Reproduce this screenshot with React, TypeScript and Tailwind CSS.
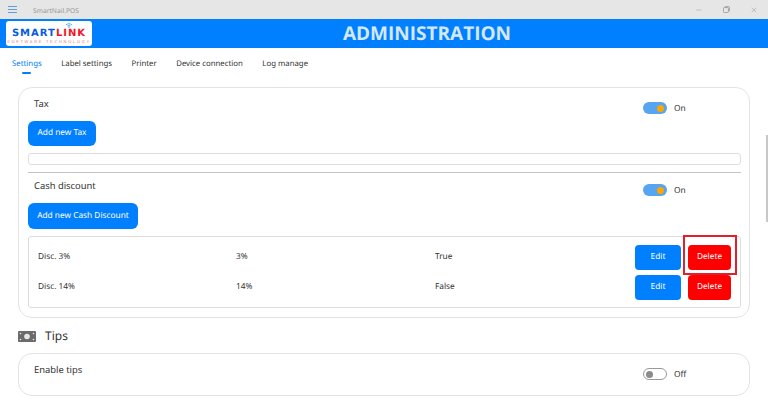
import { Minus, X } from 'lucide-react';

const tabs = ['Settings', 'Label settings', 'Printer', 'Device connection', 'Log manage'];

function Toggle({ on }: { on: boolean }) {
  return (
    <div className="w-[43px] flex items-center gap-[7px]">
      {on ? (
        <div className="w-[24px] h-[12px] shrink-0 rounded-full bg-[#55a5f0] flex items-center justify-end pr-[3px]">
          <div className="w-[7px] h-[7px] rounded-full bg-[#ffa500]" />
        </div>
      ) : (
        <div className="w-[24px] h-[12px] shrink-0 rounded-full border border-[#999999] flex items-center pl-[2px]">
          <div className="w-[7px] h-[7px] rounded-full bg-[#8a8a8a]" />
        </div>
      )}
      <span className="mt-[2px] text-[8.4px] leading-[10px] text-[#333333]">{on ? 'On' : 'Off'}</span>
    </div>
  );
}

function ActionButton({ label, red, outlined }: { label: string; red?: boolean; outlined?: boolean }) {
  return (
    <div
      className={`relative h-[25px] rounded-[4px] flex items-center justify-center text-[8.3px] text-white ${
        red ? 'w-[43px] bg-[#ff0000]' : 'w-[46px] bg-[#0080ff]'
      }`}
    >
      {label}
      {outlined && <div className="absolute -left-[5px] -right-[6px] -top-[10px] -bottom-[5px] border-2 border-[#e0202c]" />}
    </div>
  );
}

function DiscountRow({ name, pct, active, outlined }: { name: string; pct: string; active: string; outlined?: boolean }) {
  return (
    <div className="flex items-center h-[30px] text-[8.3px] text-[#333333]">
      <div className="w-[198px]">{name}</div>
      <div className="w-[199px]">{pct}</div>
      <div className="w-[200px]">{active}</div>
      <div className="flex gap-[7px]">
        <ActionButton label="Edit" />
        <ActionButton label="Delete" red outlined={outlined} />
      </div>
    </div>
  );
}

function Logo() {
  return (
    <div className="w-[86px] h-[25px] shrink-0 bg-white rounded-[3px] flex flex-col items-center justify-end pb-[2px] relative">
      <svg viewBox="0 0 10 6" className="absolute top-[2px] left-[59px] w-[8px] h-[5px]" fill="none" stroke="#3fa0e8" strokeWidth="1">
        <path d="M1 2.2C3.5 .4 6.5 .4 9 2.2M2.8 3.6C4 2.8 6 2.8 7.2 3.6" />
        <circle cx="5" cy="5" r=".5" />
      </svg>
      <div className="font-['DejaVu_Sans',sans-serif] font-bold text-[10px] leading-[10px] tracking-[1px] flex">
        <span className="text-[#0a5be0]">SMART</span>
        <span className="text-[#f01528]">LINK</span>
      </div>
      <div className="font-['Liberation_Sans',sans-serif] text-[4px] leading-[5px] tracking-[1.7px] text-[#e07080] whitespace-nowrap">
        SOFTWARE TECHNOLOGY
      </div>
    </div>
  );
}

export default function App() {
  return (
    <div className="w-[768px] h-[403px] overflow-hidden bg-white flex flex-col antialiased [text-rendering:geometricPrecision] font-['Noto_Sans',sans-serif]">
      <div className="h-[19px] bg-[#e6e6e6] flex items-center pl-[8px] pr-[10px] shrink-0">
        <svg viewBox="0 0 9 7" className="w-[9px] h-[7px]" stroke="#5a9fe0" strokeWidth="1">
          <path d="M0 .5H9M0 3.5H9M0 6.5H9" />
        </svg>
        <span className="ml-[16px] mt-[3px] text-[6.7px] text-[#999999]">SmartNail.POS</span>
        <div className="ml-auto flex items-center gap-[20px] text-[#999999]">
          <Minus className="w-[8px] h-[8px]" strokeWidth={1.5} />
          <svg viewBox="0 0 8 8" className="w-[7px] h-[7px]" fill="none" stroke="currentColor">
            <rect x=".5" y="1.8" width="5.7" height="5.7" rx="1" />
            <path d="M2 1.2C2.2 .7 2.6 .5 3 .5H6C6.8 .5 7.5 1.2 7.5 2V5C7.5 5.4 7.3 5.8 6.8 6" />
          </svg>
          <X className="w-[8px] h-[8px]" strokeWidth={1.5} />
        </div>
      </div>

      <div className="h-[29px] bg-[#0080ff] shrink-0 flex items-center pl-[6px]">
        <Logo />
        <div className="flex-1 text-center pr-[6px] text-[19px] font-bold text-[#d5e8fb] font-['Open_Sans',sans-serif]">
          ADMINISTRATION
        </div>
      </div>

      <div className="h-[39px] shrink-0 flex items-start pl-[12px] gap-[19.5px] pt-[9px] text-[7.8px] leading-[14px] text-[#333333]">
        {tabs.map((t, i) => (
          <div key={t} className={i === 0 ? 'text-[#0080ff] flex flex-col items-center' : ''}>
            {t}
            {i === 0 && <div className="w-[9px] h-[2px] mt-[1px] rounded-full bg-[#0080ff]" />}
          </div>
        ))}
      </div>

      <div className="flex-1 flex min-h-0">
        <div className="flex-1 pl-[18px] pr-[14px] flex flex-col min-w-0">
          <div className="h-[231px] shrink-0 border border-[#e3e3e3] rounded-[14px] pl-[9px] pr-[8px] pt-[9px]">
            <div className="flex justify-between items-start pl-[6px] pr-[55px]">
              <span className="text-[9.4px] leading-[14px] text-[#333333]">Tax</span>
              <div className="mt-[5px]"><Toggle on /></div>
            </div>
            <div className="mt-[7px] w-[68px] h-[25px] rounded-[6px] bg-[#0080ff] text-white text-[8.3px] flex items-center justify-center">
              Add new Tax
            </div>
            <div className="mt-[7px] h-[12px] border border-[#dddddd] rounded-[3px]" />
            <div className="mt-[7px] h-px bg-[#c4c4c4]" />
            <div className="mt-[6px] flex justify-between items-start pl-[6px] pr-[55px]">
              <span className="text-[9.4px] leading-[14px] text-[#333333]">Cash discount</span>
              <div className="mt-[5px]"><Toggle on /></div>
            </div>
            <div className="mt-[7px] w-[110px] h-[26px] rounded-[6px] bg-[#0080ff] text-white text-[8.3px] flex items-center justify-center">
              Add new Cash Discount
            </div>
            <div className="mt-[7px] h-[72px] border border-[#dddddd] rounded-[3px] pl-[9px] pt-[5px]">
              <DiscountRow name="Disc. 3%" pct="3%" active="True" outlined />
              <DiscountRow name="Disc. 14%" pct="14%" active="False" />
            </div>
          </div>

          <div className="mt-[9px] flex items-center h-[18px] shrink-0">
            <svg viewBox="0 0 18 11" className="w-[18px] h-[11px]">
              <rect width="18" height="11" rx="1" fill="#6b6b6b" />
              <circle cx="9" cy="5.5" r="2.8" fill="#e8e8e8" />
              <circle cx="2.5" cy="2.5" r=".8" fill="#e8e8e8" />
              <circle cx="15.5" cy="2.5" r=".8" fill="#e8e8e8" />
              <circle cx="2.5" cy="8.5" r=".8" fill="#e8e8e8" />
              <circle cx="15.5" cy="8.5" r=".8" fill="#e8e8e8" />
            </svg>
            <span className="ml-[9px] text-[12px] text-[#333333]">Tips</span>
          </div>

          <div className="mt-[8px] h-[43px] shrink-0 border border-[#e3e3e3] rounded-[14px] pl-[15px] pr-[63px] pt-[9px] flex justify-between items-start">
            <span className="text-[9.4px] leading-[14px] text-[#333333]">Enable tips</span>
            <div className="mt-[5px]"><Toggle on={false} /></div>
          </div>
        </div>
        <div className="w-[4px] shrink-0 pt-[48px]">
          <div className="w-[2px] h-[87px] bg-[#c8c8c8] ml-[2px]" />
        </div>
      </div>
    </div>
  );
}
